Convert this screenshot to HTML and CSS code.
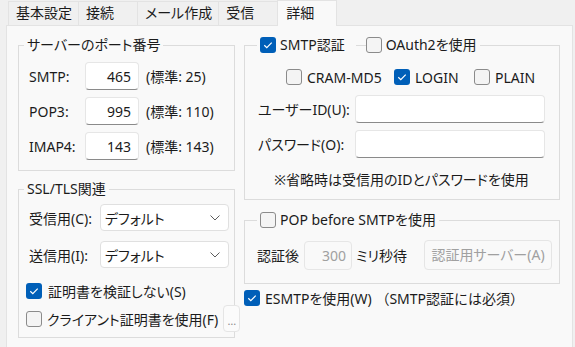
FILE: index.html
```html
<!doctype html>
<html lang="ja">
<head>
    <meta charset="utf-8">
    <title>詳細設定</title>
    <link rel="stylesheet" href="styles.css">
</head>
<body>
    <div class="tabs">
        <div class="tab">基本設定</div>
        <div class="tab">接続</div>
        <div class="tab">メール作成</div>
        <div class="tab">受信</div>
        <div class="tab active">詳細</div>
    </div>

    <div class="panel">
        <div class="col left">
            <fieldset class="group ports">
                <legend>サーバーのポート番号</legend>
                <div class="body">
                    <div class="port-row"><span class="lbl">SMTP:</span><input class="field num" value="465"><span>(標準: 25)</span></div>
                    <div class="port-row"><span class="lbl">POP3:</span><input class="field num" value="995"><span>(標準: 110)</span></div>
                    <div class="port-row"><span class="lbl">IMAP4:</span><input class="field num" value="143"><span>(標準: 143)</span></div>
                </div>
            </fieldset>

            <fieldset class="group ssl">
                <legend>SSL/TLS関連</legend>
                <div class="body">
                    <div class="sel-row">
                        <span class="lbl">受信用(C):</span>
                        <div class="select">デフォルト<svg width="10" height="6" viewBox="0 0 10 6"><path d="M0.5 0.5 L5 5 L9.5 0.5" fill="none" stroke="#5c5c5c" stroke-width="1"/></svg></div>
                    </div>
                    <div class="sel-row">
                        <span class="lbl">送信用(I):</span>
                        <div class="select">デフォルト<svg width="10" height="6" viewBox="0 0 10 6"><path d="M0.5 0.5 L5 5 L9.5 0.5" fill="none" stroke="#5c5c5c" stroke-width="1"/></svg></div>
                    </div>
                    <div class="check-row first">
                        <span class="cb on"><svg width="16" height="16" viewBox="0 0 16 16"><path d="M4.3 8.3 L6.8 10.7 L11.7 5.6" fill="none" stroke="#fff" stroke-width="1.2"/></svg></span>
                        <span>証明書を検証しない(S)</span>
                    </div>
                    <div class="check-row second">
                        <span class="cb"></span>
                        <span class="nowrap">クライアント証明書を使用(F)</span>
                        <span class="dots">…</span>
                    </div>
                </div>
            </fieldset>
        </div>

        <div class="col right">
            <fieldset class="group auth">
                <legend>
                    <span class="cb on"><svg width="16" height="16" viewBox="0 0 16 16"><path d="M4.3 8.3 L6.8 10.7 L11.7 5.6" fill="none" stroke="#fff" stroke-width="1.2"/></svg></span>
                    <span class="txt">SMTP認証</span>
                    <span class="rule"></span>
                    <span class="cb"></span>
                    <span class="txt">OAuth2を使用</span>
                </legend>
                <div class="body">
                    <div class="methods">
                        <span class="opt cram"><span class="cb"></span>CRAM-MD5</span>
                        <span class="opt login"><span class="cb on"><svg width="16" height="16" viewBox="0 0 16 16"><path d="M4.3 8.3 L6.8 10.7 L11.7 5.6" fill="none" stroke="#fff" stroke-width="1.2"/></svg></span>LOGIN</span>
                        <span class="opt"><span class="cb"></span>PLAIN</span>
                    </div>
                    <div class="cred-row"><span class="lbl">ユーザーID(U):</span><input class="field wide"></div>
                    <div class="cred-row"><span class="lbl">パスワード(O):</span><input class="field wide"></div>
                    <p class="note">※省略時は受信用のIDとパスワードを使用</p>
                </div>
            </fieldset>

            <fieldset class="group pbs">
                <legend>
                    <span class="cb"></span>
                    <span class="txt">POP before SMTPを使用</span>
                </legend>
                <div class="body">
                    <div class="wait-row">
                        <span>認証後</span>
                        <input class="field num off" value="300" disabled>
                        <span>ミリ秒待</span>
                        <span class="btn off">認証用サーバー(A)</span>
                    </div>
                </div>
            </fieldset>

            <div class="esmtp">
                <span class="cb on"><svg width="16" height="16" viewBox="0 0 16 16"><path d="M4.3 8.3 L6.8 10.7 L11.7 5.6" fill="none" stroke="#fff" stroke-width="1.2"/></svg></span>
                <span>ESMTPを使用(W) <span class="wide-paren">（SMTP認証には必須）</span></span>
            </div>
        </div>
    </div>
</body>
</html>
```

FILE: styles.css
```css
* { box-sizing: border-box; }

body {
    margin: 0;
    background: #f0f0f0;
    color: #1b1b1b;
    font-family: "Noto Sans", "Noto Sans CJK JP", sans-serif;
    font-size: 14px;
    font-feature-settings: "palt";
    overflow: hidden;
}

.nowrap { white-space: nowrap; }

/* tab strip */
.tabs {
    display: flex;
    margin-left: 8px;
    height: 25px;
    align-items: flex-end;
}
.tab {
    min-width: 60px;
    height: 24px;
    padding: 0 6px 0 7px;
    line-height: 22px;
    border: 1px solid #e3e3e3;
    border-bottom: none;
    margin-right: -1px;
    background: #f0f0f0;
}
.tab.active {
    height: 26px;
    margin-bottom: -1px;
    background: #f9f9f9;
    position: relative;
    z-index: 1;
    line-height: 24px;
    padding-left: 8px;
}

.panel {
    display: flex;
    gap: 9px;
    margin: 0 2px 0 6px;
    height: 330px;
    padding: 9px 12px 0 11px;
    background: #f9f9f9;
    border: 1px solid #e3e3e3;
}
.col.left { width: 217px; flex: none; }
.col.right { width: 316px; flex: none; }

/* group boxes */
fieldset.group {
    margin: 0;
    padding: 0;
    border: 1px solid #dcdcdc;
    min-width: 0;
}
fieldset.group legend {
    margin-left: 5px;
    padding: 0 3px;
    line-height: 20px;
    height: 20px;
}

.lbl { flex: none; }

.field {
    font: inherit;
    color: inherit;
    background: #fff;
    border: 1px solid #e6e6e6;
    border-bottom-color: #8a8a8a;
    border-radius: 4px;
    padding: 0 7px;
    outline: none;
}
.field.num { text-align: right; }
.field.off {
    background: #f9f9f9;
    border-color: #e6e6e6;
    color: #a0a0a0;
}

/* ports */
.ports .body { padding: 7px 0 10px 10px; display: flex; flex-direction: column; gap: 7px; }
.port-row { display: flex; align-items: center; }
.port-row .lbl { width: 56px; }
.port-row .field { width: 54px; height: 28px; margin-right: 7px; }

/* ssl */
fieldset.ssl { margin-top: 8px; }
.ssl .body { padding: 5px 0 5px 10px; }
.sel-row { display: flex; align-items: center; margin-bottom: 10px; }
.sel-row .lbl { width: 71px; }
.select {
    width: 129px;
    height: 27px;
    display: flex;
    align-items: center;
    justify-content: space-between;
    padding: 0 8px 0 4px;
    background: #fff;
    border: 1px solid #e0e0e0;
    border-radius: 4px;
}
.check-row { display: flex; align-items: center; gap: 6px; margin-left: -3px; }
.check-row.first { height: 24px; margin-top: 11px; }
.check-row.second { height: 27px; margin-top: 2px; gap: 5px; }
.dots {
    flex: none;
    margin-left: auto;
    margin-right: 5px;
    width: 17px;
    height: 27px;
    border: 1px solid #e5e5e5;
    border-radius: 4px;
    background: #fbfbfb;
    color: #8a8a8a;
    font-size: 11px;
    text-align: center;
    line-height: 30px;
}

/* checkbox */
.cb {
    flex: none;
    display: inline-block;
    width: 16px;
    height: 16px;
    border: 1px solid #8b8b8b;
    border-radius: 3px;
    background: #f4f4f4;
    vertical-align: middle;
}
.cb.on {
    border: none;
    background: #005fb8;
}
.cb svg { display: block; }

/* legends holding checkboxes */
fieldset.auth legend, fieldset.pbs legend {
    display: flex;
    align-items: center;
    margin-left: 12px;
}
legend .txt { margin-left: 4px; white-space: nowrap; }
legend .rule {
    width: 10px;
    margin: 1px 0 0 11px;
    border-top: 1px solid #dcdcdc;
}

.auth .body { padding: 12px 14px 9px 13px; }
.methods { display: flex; height: 20px; align-items: center; padding-left: 28px; }
.opt { display: flex; align-items: center; gap: 5px; }
.opt.cram { width: 108px; }
.opt.login { width: 80px; }
.cred-row { display: flex; align-items: center; justify-content: space-between; margin-top: 8px; }
.cred-row + .cred-row { margin-top: 7px; }
.field.wide { width: 190px; height: 28px; }
.note {
    margin: 12px 0 0;
    line-height: 20px;
    text-align: center;
}

/* pop before smtp */
fieldset.pbs { margin-top: 10px; }
.pbs .body { padding: 10px 0 13px 12px; }
.wait-row { display: flex; align-items: center; }
.wait-row .field { width: 48px; height: 29px; margin: 0 4px 0 5px; padding: 0 5px; }
.btn {
    height: 30px;
    width: 128px;
    margin-left: auto;
    margin-right: 7px;
    border: 1px solid #e5e5e5;
    border-radius: 4px;
    background: #f9f9f9;
    text-align: center;
    line-height: 28px;
}
.btn.off { color: #a0a0a0; }

.esmtp { display: flex; align-items: center; gap: 5px; height: 20px; margin-top: 4px; white-space: nowrap; }
.wide-paren { font-feature-settings: normal; }
```
